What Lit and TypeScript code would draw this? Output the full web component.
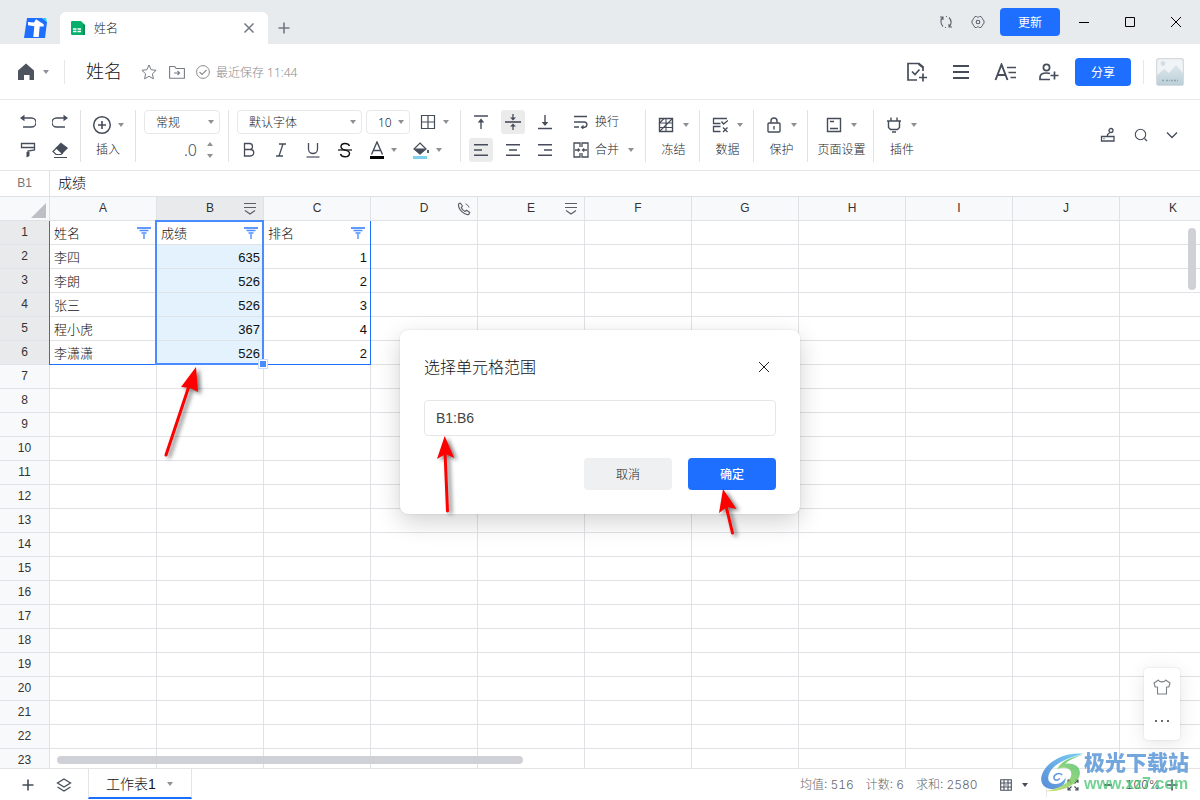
import { LitElement, html, css, svg, nothing } from "lit";
import { customElement, state } from "lit/decorators.js";
import { classMap } from "lit/directives/class-map.js";

const ic = (w: number, h: number, body: unknown) => html`<svg
  width=${w} height=${h} viewBox="0 0 ${w} ${h}" fill="none" stroke="currentColor" stroke-width="1.4" aria-hidden="true"
>${body}</svg>`;

const icons = {
  logo: () => ic(24, 22, svg`<path d="M3 1H18l5 4-2 16H0z" fill="#1e6fff" stroke="none"/><path d="M18 1h4l1 4z" fill="#19d3f5" stroke="none"/><path d="M4 5l6 .6L12 2.300l7.700 5v2.200h-4l-1 10.500H9.300l1-10.700L4 8.300z" fill="#fff" stroke="none"/>`),
  sheet: () => ic(14, 14, svg`<path d="M1 0h9l4 4v10H1a1 1 0 0 1-1-1V1a1 1 0 0 1 1-1z" fill="#07b06a" stroke="none"/><path d="M12 3l2 1v10h-2z" fill="#098f55" stroke="none"/><path d="M2 8h3.500M6.500 8H10M2 10.500h3.500M6.500 10.500H10" stroke="#fff" stroke-width="1.300"/>`),
  tabClose: () => ic(12, 12, svg`<path d="M1.500 1.500l9 9M10.500 1.500l-9 9" stroke-width="1.500"/>`),
  plus: () => ic(12, 12, svg`<path d="M6 .5v11M.5 6h11" stroke-width="1.600"/>`),
  sync: () => ic(14, 14, svg`<path d="M1 2h3v3M4 2C1.500 4 1 8.500 4 11.500M13 12h-3V9M10 12c2.500-2 3-6.500 0-9.500M7 1.500h1M6 12.500h1" stroke-width="1.100"/>`),
  gear: () => ic(14, 14, svg`<path d="M4 1.500h1.500l.8.600h1.400l.8-.6H10l1.500 2.200.3 1 1.200.8v3l-1.200.8-.3 1L10 12.500H8.500l-.8-.6H6.300l-.8.600H4l-1.500-2.200-.3-1L1 8.500v-3l1.200-.8.300-1z" stroke-width="1" stroke-linejoin="round"/><circle cx="7" cy="7" r="1.800" stroke-width="1.100"/>`),
  min: () => ic(12, 12, svg`<path d="M1 6.500h10" stroke-width="1"/>`),
  max: () => ic(12, 12, svg`<path d="M1.500 1.500h9v9h-9z" stroke-width="1"/>`),
  close: () => ic(12, 12, svg`<path d="M1 1l10 10M11 1L1 11" stroke-width="1"/>`),
  home: () => ic(18, 18, svg`<path d="M9 .5L17 7.500V17h-4.500v-5h-2.500v5H1V7.500z" fill="#4e545f" stroke="none"/><path d="M7 12h4v5H7z" fill="#fff" stroke="none"/>`),
  star: () => ic(16, 16, svg`<path d="M8 1l2.100 4.700 5 .6-3.700 3.500 1 5L8 12.300l-4.400 2.500 1-5L.9 6.300l5-.6z" stroke-width="1" stroke-linejoin="round"/>`),
  folder: () => ic(16, 14, svg`<path d="M.6 1.500h5l1.500 2h8.300v9.700H.6z" stroke-width="1.100" stroke-linejoin="round"/><path d="M5 8h5.500M8.500 6l2 2-2 2" stroke-width="1.200"/>`),
  saved: () => ic(14, 14, svg`<circle cx="7" cy="7" r="6.400" stroke-width="1"/><path d="M3.500 7l2.500 2.500 4.500-4.500" stroke-width="1.100"/>`),
  task: () => ic(22, 20, svg`<path d="M17 9V5l-4-3.500H2V18h9" stroke-width="1.700"/><path d="M6 9.500l3 3 4.500-5M12.500 2l4.500 3.500" stroke-width="1.700"/><path d="M17 11.500v8M13 15.500h8" stroke-width="1.700"/>`),
  menu: () => ic(18, 16, svg`<path d="M1 2h16M1 8h16M1 14h16" stroke-width="1.800"/>`),
  textStyle: () => ic(24, 18, svg`<path d="M1.500 17L7.500 1.500 13.500 17M3.500 12h8" stroke-width="1.900"/><path d="M13 4.500h9M14.500 9.500h7.500M16.500 14.500H22" stroke-width="1.700"/>`),
  addUser: () => ic(22, 18, svg`<circle cx="8.500" cy="4.500" r="3.100" stroke-width="1.700"/><path d="M12 16.500H2v-2c0-3 2-4.500 6.500-4.500 1.500 0 2.500 0 3.500.5" stroke-width="1.700"/><path d="M16.500 8.500v8M12.500 12.500h8" stroke-width="1.700"/>`),
  avatar: () => ic(28, 28, svg`<defs><linearGradient id="sky" x2="0" y2="1"><stop stop-color="#dde7ec"/><stop offset="1" stop-color="#bccfd8"/></linearGradient></defs><rect x=".5" y=".5" width="27" height="27" rx="3" fill="#f1f4f6" stroke="#d5dadd"/><circle cx="7" cy="5.500" r="2.400" fill="#d4dfe5" stroke="none"/><path d="M1 17l7-6 5 4 7-8 7 8v12H1z" fill="url(#sky)" stroke="none"/><path d="M6 22.500h3m1 0h2m1 0h1m1 0h7" stroke="#8ba6b4" stroke-dasharray="2 1"/>`),
  undo: () => ic(16, 16, svg`<path d="M3 4h8.500a4.500 4.500 0 0 1 0 9H3" stroke-width="1.300"/><path d="M0 4L4.500.8v6.400z" fill="currentColor" stroke="none"/>`),
  redo: () => ic(16, 16, svg`<path d="M13 4H4.500a4.500 4.500 0 0 0 0 9H13" stroke-width="1.300"/><path d="M16 4L11.500.8v6.400z" fill="currentColor" stroke="none"/>`),
  brush: () => ic(16, 16, svg`<path d="M1.500 1.500h13v4h-13zM14.500 4v4L8 9v2" stroke-width="1.300"/><path d="M6.500 10h3v4l-3 1.500z" fill="currentColor" stroke="none"/>`),
  eraser: () => ic(16, 16, svg`<path d="M9 1.500l6 4.500-5 5L4.500 6z" fill="currentColor"/><path d="M5 5.500L1 9.500l3 3h5l2-2M2 15.500h13" stroke-width="1.200"/>`),
  insert: () => ic(20, 20, svg`<circle cx="10" cy="10" r="8.300" stroke-width="1.500"/><path d="M10 6v8M6 10h8" stroke-width="1.600"/>`),
  borders: () => ic(16, 16, svg`<path d="M1.500 1.500h13v13h-13zM8 1.500v13M1.500 8h13" stroke-width="1.200"/>`),
  bold: () => ic(14, 16, svg`<path d="M2.500 1.500h5a3 3 0 0 1 0 6h-5zM2.500 7.500h6a3.200 3.200 0 0 1 0 6.500h-6z" stroke-width="1.300"/>`),
  italic: () => ic(14, 16, svg`<path d="M5 2h7M2 14h7M9 2L5 14" stroke-width="1.300"/>`),
  underline: () => ic(14, 16, svg`<path d="M2.500 1v6a4.500 4.500 0 0 0 9 0V1" stroke-width="1.300"/><path d="M.5 15h13" stroke-width="1.200"/>`),
  strike: () => ic(14, 16, svg`<path d="M11.500 4C11 2.500 9 1.500 7 1.500S3 2.500 3 4.700C3 7 5 7.500 7 8s4.500 1 4.500 3.300S9.500 14.800 7 14.800 3 13.500 2.500 12" stroke="#111" stroke-width="1.400"/><path d="M0 8h14" stroke="#111" stroke-width="1.200"/>`),
  color: () => ic(14, 18, svg`<path d="M1.500 13.500L7 1l5.500 12.500M3.500 9.500h7" stroke-width="1.400"/><path d="M0 16.500h14" stroke="#000" stroke-width="3"/>`),
  fill: () => ic(16, 18, svg`<path d="M7 2l6 6-6 5-6-5z" stroke-width="1.200"/><path d="M1 7.500h12l-6 6z" fill="currentColor" stroke="none"/><path d="M15 9v3" stroke-width="1.800"/><path d="M0 16.500h14" stroke="#7fd0ef" stroke-width="3"/>`),
  vTop: () => ic(14, 16, svg`<path d="M0 2h14" stroke-width="1.500"/><path d="M7 15V7"/><path d="M7 4.500l3.300 4H3.700z" fill="currentColor" stroke="none"/>`),
  vMid: () => ic(16, 18, svg`<path d="M0 9h16" stroke-width="1.600"/><path d="M8 1v4M8 17v-4" stroke-width="1.300"/><path d="M8 7.500L11 4.500H5zM8 10.500l3 3H5z" fill="currentColor" stroke="none"/>`),
  vBot: () => ic(14, 16, svg`<path d="M0 14.500h14" stroke-width="1.500"/><path d="M7 1v8"/><path d="M7 12L3.700 8h6.600z" fill="currentColor" stroke="none"/>`),
  hLeft: () => ic(14, 14, svg`<path d="M0 1.700h14M0 7h8M0 12.300h14" stroke-width="1.500"/>`),
  hMid: () => ic(14, 14, svg`<path d="M0 1.700h14M3 7h8M0 12.300h14" stroke-width="1.500"/>`),
  hRight: () => ic(14, 14, svg`<path d="M0 1.700h14M6 7h8M0 12.300h14" stroke-width="1.500"/>`),
  wrap: () => ic(16, 14, svg`<path d="M1 1.500h13M1 7h11a2.700 2.700 0 0 1 0 5.200H9M1 12h5"/><path d="M7.500 12.200l3-2.500v5z" fill="currentColor" stroke="none"/>`),
  merge: () => ic(16, 16, svg`<path d="M7 5V1H1v14h6v-4M9 5V1h6v14H9v-4M2 8h4M14 8h-4" stroke-width="1.300"/><path d="M7.500 8L4.800 5.700v4.600zM8.500 8l2.700-2.300v4.600z" fill="currentColor" stroke="none"/>`),
  freeze: () => ic(16, 16, svg`<path d="M1.500 1.500h13v13h-13z" stroke-width="1.400"/><path d="M1.500 6h13M8 1.500v13M1.500 10.500h13M1.500 6L6 1.500M1.500 14.500l13-13" stroke-width="1.100"/>`),
  data: () => ic(16, 16, svg`<path d="M15 1.500H1.500v5h7M8.500 9.500h-7v5h7M9.500 4.500l2 2.500L16 3.500M11 10.500l4.500 4.500M15.500 10.500L11 15" stroke-width="1.300"/>`),
  lock: () => ic(16, 16, svg`<rect x="2" y="6" width="12" height="9" rx="1"/><path d="M5 6V4a3 3 0 0 1 6 0v2M8 9v3.500" stroke-width="1.400"/>`),
  page: () => ic(16, 16, svg`<path d="M1.500 1.500h13v13h-13zM4 4.500h4M4 11.500h8"/>`),
  plugin: () => ic(16, 16, svg`<path d="M1 4h14M2.500 4v6.500l2 2h7l2-2V4M5 4V.5M11 4V.5M6 15h4" stroke-width="1.400"/>`),
  remote: () => ic(16, 16, svg`<path d="M1.500 9.500h12.500v4.500H1.500zM3.500 11.700h1M7.500 9.500v-2l2-1.500" stroke-width="1.300"/><circle cx="11" cy="3.500" r="2" stroke-width="1.300"/>`),
  search: () => ic(14, 14, svg`<circle cx="6.500" cy="6.500" r="5.200" stroke-width="1.100"/><path d="M10.500 10.500l2.500 2.500" stroke-width="1.200"/>`),
  chev: () => ic(12, 8, svg`<path d="M1 1.500l5 5 5-5"/>`),
  colMenu: () => ic(14, 13, svg`<path d="M1 1.500h12M1 5.500h12M2 8.500l5 3.500 5-3.500" stroke="#5c6066" stroke-width="1.200"/>`),
  phone: () => ic(14, 14, svg`<path d="M1.500 2L3.300 1l2.200 3-1.200 1.700c.8 1.600 2.100 2.900 3.700 3.700L9.700 8.200l3 2.200-1 2C7.500 13.500 1 7.500 1.500 2z" stroke="#5c6066" stroke-width="1.200" stroke-linejoin="round"/><path d="M8.500 2c1.800.4 3 1.600 3.500 3.500" stroke="#5c6066" stroke-width="1"/>`),
  filter: () => ic(14, 12, svg`<path d="M0 1h14" stroke="#1e6fff" stroke-width="1.400"/><path d="M2.500 3.500h9M4.500 6h5" stroke="#4d8dff" stroke-width="1.300"/><path d="M7 7v5" stroke="#4d8dff" stroke-width="1.400"/>`),
  shirt: () => ic(18, 16, svg`<path d="M5.500 1L1 4l1.200 4H4.500v7h9V8h2.300L17 4l-4.500-3C12 3.500 6 3.500 5.500 1z" stroke-width="1.100" stroke-linejoin="round"/>`),
  layers: () => ic(16, 14, svg`<path d="M8 1l6.500 4L8 9 1.500 5zM1.500 9L8 13l6.500-4" stroke-width="1.300"/>`),
  view: () => ic(12, 12, svg`<path d="M.7.700h10.600v10.600H.7zM4 1v10M8 1v10M1 4h10M1 8h10" stroke-width="1.100"/><path d="M4.600 4.600h2.800v2.800H4.600z" fill="#b9bcc2" stroke="none"/>`),
  full: () => ic(12, 12, svg`<path d="M1 4V1h3M8 1h3v3M11 8v3H8M4 11H1V8M1 1l3.500 3.500M11 1L7.500 4.500M11 11L7.500 7.500M1 11l3.500-3.500" stroke-width="1.100"/>`),
  minus: () => ic(10, 12, svg`<path d="M1 6h8" stroke-width="1.600"/>`),
};

type Row = [string, string, string];

@customElement("app-root")
export class AppRoot extends LitElement {
  @state() private range = "B1:B6";

  private cols = [..."ABCDEFGHIJK"];
  private rows: Row[] = [
    ["姓名", "成绩", "排名"],
    ["李四", "635", "1"],
    ["李朗", "526", "2"],
    ["张三", "526", "3"],
    ["程小虎", "367", "4"],
    ["李潇潇", "526", "2"],
  ];

  static styles = css`
    :host {
      display: flex; flex-direction: column; height: 100vh; overflow: hidden; position: relative;
      background: #fff; color: #22262c;
      font: 300 12px/18px "Liberation Sans", "Noto Sans CJK SC", sans-serif;
    }
    * { box-sizing: border-box; }
    svg { display: block; flex: none; }
    button, select, input { font: inherit; color: inherit; margin: 0; padding: 0; border: 0; background: none; }
    button { display: flex; align-items: center; justify-content: center; flex: none; }
    .blue { background: #1e6fff; color: #fff; border-radius: 4px; font-weight: 400; padding-top: 2px; }
    .caret { width: 0; height: 0; flex: none; border: 3px solid transparent; border-top: 4px solid #8d9095; border-bottom: 0; margin: 0 1px; }
    .spacer { flex: 1; }

    .titlebar { display: flex; height: 44px; padding-right: 1px; background: #e8ebee; flex: none; color: #5b616b; }
    .brand { width: 60px; padding: 17px 0 0 24px; }
    .tab { display: flex; align-items: center; gap: 9px; width: 208px; margin-top: 12px; padding: 0 13px 0 11px; background: #fff; border-radius: 6px 6px 0 0; color: #222; }
    .tab span, .saved span { padding-top: 2px; }
    .tab button { margin-left: auto; color: #737982; }
    .newtab { width: 32px; margin-top: 12px; color: #737982; }
    .tools { display: flex; align-items: center; }
    .tools .small { width: 32px; height: 32px; }
    .update { width: 60px; height: 28px; margin: 0 1px 0 6px; }
    .win { width: 46px; height: 44px; color: #000; }

    .header { display: flex; align-items: center; height: 56px; flex: none; border-bottom: 1px solid #e7e9eb; padding: 0 16px 0 17px; color: #767b85; }
    .home { gap: 7px; }
    .vline { width: 1px; height: 24px; background: #e6e8ea; flex: none; }
    .header .first { margin: 0 21px 0 14px; }
    .title { font-size: 18px; line-height: 26px; font-weight: 300; margin: 0; color: #111; }
    .meta { display: flex; align-items: center; gap: 12px; margin-left: 19px; }
    .saved { display: flex; align-items: center; gap: 6px; margin-left: -1px; color: #8c8c8c; font-family: "Noto Sans", "Noto Sans CJK SC", sans-serif; }
    .actions { display: flex; align-items: center; gap: 20px; color: #464d5a; }
    .actions .pad { padding: 0 4px; }
    .share { width: 56px; height: 28px; margin: 0 12px 0 15px; }
    .avatar { margin-left: 12px; }

    .toolbar { display: flex; height: 71px; flex: none; padding: 10px 16px 8px 0; border-bottom: 1px solid #e4e6e9; color: #464d5a; }
    .group { flex: none; border-right: 1px solid #e0e2e4; padding-left: 8px; display: flex; flex-direction: column; gap: 4px; }
    .group.last { border: 0; }
    .line { display: flex; align-items: center; gap: 8px; height: 24px; }
    .line button { min-width: 24px; height: 24px; border-radius: 3px; }
    .line button.on { background: #ebebeb; }
    .line button.drop { gap: 6px; justify-content: flex-start; padding: 0 2px 0 5px; }
    .g1 { width: 81px; padding-left: 16px; }
    .g3 { width: 93px; }
    .g4 { width: 232px; }
    .g5 { width: 185px; }
    .tall { width: 54px; }
    .ins { width: 55px; }
    .wide { width: 66px; }
    .group.stack { padding: 0 0 0 2px; gap: 0; }
    .group.ins { padding: 0; }
    .stack button { flex-direction: column; width: 100%; color: #464d5a; }
    .stack .top { display: flex; align-items: center; gap: 8px; height: 30px; }
    .stack.ins .top { gap: 5px; }
    .stack .label { padding-top: 1px; color: #22262c; white-space: nowrap; }
    .select { position: relative; display: flex; align-items: center; height: 24px; border: 1px solid #e7e8ea; border-radius: 4px; color: #22262c; font-family: "Noto Sans", "Noto Sans CJK SC", sans-serif; }
    .select select { appearance: none; width: 100%; height: 22px; padding: 1px 0 0 11px; outline: 0; }
    .select .caret { position: absolute; right: 4px; pointer-events: none; }
    .s1 { width: 76px; } .s2 { width: 125px; } .s3 { width: 44px; }
    .line.fonts { gap: 4px; }
    .line.fonts button { margin-left: 1px; }
    .line.dec { justify-content: flex-end; gap: 9px; padding-right: 14px; }
    .line.dec .num { font-size: 16px; font-family: "Noto Sans", sans-serif; }
    .spin { display: flex; flex-direction: column; gap: 8px; }
    .spin .up { transform: rotate(180deg); }
    .line button.text { gap: 6px; padding-left: 8px; }
    .line button.text span { color: #22262c; }
    .line button.text .caret { margin-left: 3px; }
    .right { display: flex; align-items: center; gap: 18px; margin: 0 6px 2px 0; }

    .formula { display: flex; align-items: flex-start; height: 26px; flex: none; border-bottom: 1px solid #dfe1e4; }
    .ref { width: 50px; text-align: center; border-right: 1px solid #dfe1e4; line-height: 25px; color: #777; }
    .formula input { flex: 1; font-size: 14px; padding-left: 8px; height: 22px; color: #000; outline: 0; }

    .sheet { position: relative; flex: 1; min-height: 0; overflow: hidden; }
    table { table-layout: fixed; border-collapse: separate; border-spacing: 0; width: 1227px; }
    th, td { height: 24px; padding: 0; border: solid #e0e2e5; border-width: 0 1px 1px 0; font-weight: 400; line-height: 22px; overflow: hidden; white-space: nowrap; }
    thead th { background: #f8f9fb; line-height: 23px; color: #333; }
    tbody th { background: #f8f9fb; color: #333; vertical-align: top; }
    thead th.sel, tbody th.sel { background: #e8eaec; }
    .corner { width: 50px; }
    .corner i { display: block; width: 0; height: 0; margin: 3px 0 0 31px; border-left: 15px solid transparent; border-bottom: 15px solid #bcbfc4; }
    .col { display: grid; grid-template-columns: 1fr auto 1fr; align-items: center; }
    .col svg { grid-column: 3; justify-self: end; margin-right: 6px; }
    td { font-size: 13px; font-weight: 300; color: #111; }
    td .cell { display: flex; align-items: center; justify-content: space-between; padding: 0 5px 0 4px; height: 23px; }
    td .cell span { padding-top: 2px; line-height: 21px; }
    td .cell.numeric { justify-content: flex-end; padding-right: 3px; }
    td.fill { background: #e3f2fd; }
    td.blank { height: 24px; }
    .dataset { position: absolute; left: 49px; top: 24px; width: 322px; height: 144px; border: 1px solid #1e6fff; border-top: 0; pointer-events: none; }
    .selection { position: absolute; left: 155px; top: 23px; width: 109px; height: 145px; border: 2px solid #4a8cff; pointer-events: none; }
    .handle { position: absolute; right: -5px; bottom: -5px; width: 8px; height: 8px; background: #4a8cff; border: 1px solid #fff; outline: 1px solid #c8dcff; }
    .hbar { position: absolute; left: 57px; bottom: 4px; width: 466px; height: 8px; border-radius: 4px; background: #d0d1d6; }
    .vbar { position: absolute; right: 4px; top: 31px; width: 8px; height: 62px; border-radius: 4px; background: #d0d1d6; }
    .float { position: absolute; right: 20px; bottom: 28px; width: 36px; padding: 2px 0; background: #fff; border-radius: 4px; box-shadow: 0 0 2px #0002, 0 4px 20px #0000001a; color: #7b8087; }
    .float button { width: 36px; height: 34px; }
    .dots { gap: 4px; }
    .dots i { width: 2px; height: 2px; background: #666b73; }

    .bottom { display: flex; align-items: center; height: 32px; flex: none; border-top: 1px solid #e2e4e6; color: #464d5a; padding-right: 22px; }
    .bottom .sq { width: 36px; height: 30px; }
    .bottom .sq:first-child { margin-left: 10px; }
    .sheettab { align-self: flex-start; height: 30px; margin-left: 6px; padding: 1px 17px 0; gap: 10px; font-size: 14px; border: 1px solid #e2e4e6; border-width: 0 1px 2px; border-bottom-color: #1e6fff; color: #111; }
    .stats { display: flex; gap: 12px; color: #666; }
    .stats, .pct { font-family: "Inter", "Noto Sans CJK SC", sans-serif; font-variant-numeric: tabular-nums; }
    .zoomctl { display: flex; align-items: center; margin-left: 23px; }
    .zoomctl .drop { gap: 9px; }
    .zoomctl .drop .caret { border-top-color: #464d5a; }
    .zoomctl .vline { margin: 0 20px 0 17px; }
    .zoomctl .less { margin: 0 12px 0 24px; }
    .zoomctl .more { margin-left: 6px; }

    .dialog { position: absolute; left: 50%; top: 330px; width: 400px; transform: translateX(-50%); padding: 24px; background: #fff; border-radius: 8px; box-shadow: 0 8px 24px #0000002e, 0 0 2px #0002; }
    .dialog header { display: flex; align-items: center; justify-content: space-between; padding-right: 6px; }
    .dialog h2 { margin: 0; padding-top: 2px; font-size: 16px; line-height: 24px; font-weight: 300; color: #111; }
    .dialog input { display: block; width: 100%; height: 36px; margin: 20px 0 22px; padding: 0 11px; border: 1px solid #e4e6e9; border-radius: 4px; font-size: 14px; outline: 0; color: #444; }
    .dialog footer { display: flex; justify-content: flex-end; gap: 16px; }
    .dialog footer button { width: 88px; height: 32px; padding-top: 2px; border-radius: 4px; }
    .cancel { background: #eff0f2; color: #222; }
    .dialog .ok { font-weight: 500; }

    .arrows { position: absolute; left: 0; top: 0; pointer-events: none; filter: drop-shadow(3px 2px 2px #0008); }
    .mark { position: absolute; right: 11px; bottom: 6px; display: flex; pointer-events: none; opacity: 0.85; font-weight: 700; }
    .mark div { display: flex; flex-direction: column; }
    .mark b { font-size: 21px; line-height: 24px; color: #5b97d8; }
    .mark span { font-size: 16px; line-height: 18px; color: #4cc474; opacity: 0.9; }
  `;

  private caret = html`<i class="caret"></i>`;

  private button(label: string, icon: unknown, cls = "") {
    return html`<button class=${cls} aria-label=${label}>${icon}</button>`;
  }

  private stack(label: string, icon: unknown, cls = "tall") {
    return html`<div class="group stack ${cls}">
      <button><span class="top">${icon}${this.caret}</span><span class="label">${label}</span></button>
    </div>`;
  }

  private select(label: string, value: string, cls: string) {
    return html`<div class="select ${cls}"><select aria-label=${label}><option>${value}</option></select>${this.caret}</div>`;
  }

  private colIcon(c: string) {
    if (c === "B" || c === "E") return icons.colMenu();
    if (c === "D") return icons.phone();
    return nothing;
  }

  private cell(row: Row | undefined, r: number, c: number) {
    const v = row?.[c];
    if (v === undefined) return html`<td class="blank"></td>`;
    return html`<td class=${classMap({ fill: c === 1 && r > 0 })}>
      <div class=${classMap({ cell: true, numeric: r > 0 && c > 0 })}><span>${v}</span>${r === 0 ? icons.filter() : nothing}</div>
    </td>`;
  }

  private sheet() {
    return html`<main class="sheet">
      <table>
        <thead><tr><th class="corner"><i></i></th>
          ${this.cols.map((c) => html`<th scope="col" class=${classMap({ sel: c === "B" })}><div class="col"><i></i><span>${c}</span>${this.colIcon(c)}</div></th>`)}
        </tr></thead>
        <tbody>
          ${Array.from({ length: 23 }, (_, r) => html`<tr>
            <th scope="row" class=${classMap({ sel: r < 6 })}>${r + 1}</th>
            ${this.cols.map((_c, c) => this.cell(this.rows[r], r, c))}
          </tr>`)}
        </tbody>
      </table>
      <div class="dataset"></div>
      <div class="selection"><i class="handle"></i></div>
      <div class="hbar"></div><div class="vbar"></div>
      <div class="float">
        ${this.button("主题", icons.shirt())}
        ${this.button("更多", html`<i></i><i></i><i></i>`, "dots")}
      </div>
    </main>`;
  }

  render() {
    return html`
      <div class="titlebar">
        <div class="brand">${icons.logo()}</div>
        <div class="tab">${icons.sheet()}<span>姓名</span>${this.button("关闭标签", icons.tabClose())}</div>
        ${this.button("新建", icons.plus(), "newtab")}
        <div class="spacer"></div>
        <div class="tools">
          ${this.button("刷新", icons.sync(), "small")}${this.button("设置", icons.gear(), "small")}
          <button class="blue update">更新</button>
          ${this.button("最小化", icons.min(), "win")}${this.button("最大化", icons.max(), "win")}${this.button("关闭", icons.close(), "win")}
        </div>
      </div>

      <div class="header">
        <button class="home" aria-label="首页">${icons.home()}${this.caret}</button>
        <div class="vline first"></div>
        <h1 class="title">姓名</h1>
        <div class="meta">
          ${this.button("收藏", icons.star())}${this.button("移动", icons.folder())}
          <div class="saved">${icons.saved()}<span>最近保存 11:44</span></div>
        </div>
        <div class="spacer"></div>
        <div class="actions">
          ${this.button("任务", icons.task())}${this.button("菜单", icons.menu(), "pad")}${this.button("文字", icons.textStyle())}${this.button("添加成员", icons.addUser())}
        </div>
        <button class="blue share">分享</button>
        <div class="vline"></div>
        <div class="avatar">${icons.avatar()}</div>
      </div>

      <div class="toolbar">
        <div class="group g1">
          <div class="line">${this.button("撤销", icons.undo())}${this.button("重做", icons.redo())}</div>
          <div class="line">${this.button("格式刷", icons.brush())}${this.button("清除", icons.eraser())}</div>
        </div>
        ${this.stack("插入", icons.insert(), "ins")}
        <div class="group g3">
          ${this.select("数字格式", "常规", "s1")}
          <div class="line dec"><span class="num">.0</span><span class="spin"><i class="caret up"></i><i class="caret"></i></span></div>
        </div>
        <div class="group g4">
          <div class="line fonts">
            ${this.select("字体", "默认字体", "s2")}${this.select("字号", "10", "s3")}
            ${this.button("边框", html`${icons.borders()}${this.caret}`, "drop")}
          </div>
          <div class="line">
            ${this.button("加粗", icons.bold())}${this.button("斜体", icons.italic())}${this.button("下划线", icons.underline())}${this.button("删除线", icons.strike())}
            ${this.button("文字颜色", html`${icons.color()}${this.caret}`, "drop")}
            ${this.button("填充颜色", html`${icons.fill()}${this.caret}`, "drop")}
          </div>
        </div>
        <div class="group g5">
          <div class="line">
            ${this.button("顶端对齐", icons.vTop())}${this.button("垂直居中", icons.vMid(), "on")}${this.button("底端对齐", icons.vBot())}
            <button class="text">${icons.wrap()}<span>换行</span></button>
          </div>
          <div class="line">
            ${this.button("左对齐", icons.hLeft(), "on")}${this.button("居中", icons.hMid())}${this.button("右对齐", icons.hRight())}
            <button class="text">${icons.merge()}<span>合并</span>${this.caret}</button>
          </div>
        </div>
        ${this.stack("冻结", icons.freeze())}${this.stack("数据", icons.data())}${this.stack("保护", icons.lock())}
        ${this.stack("页面设置", icons.page(), "wide")}${this.stack("插件", icons.plugin(), "tall last")}
        <div class="spacer"></div>
        <div class="right">${this.button("控制", icons.remote())}${this.button("搜索", icons.search())}${this.button("收起", icons.chev())}</div>
      </div>

      <div class="formula"><div class="ref">B1</div><input aria-label="编辑栏" .value=${"成绩"} /></div>

      ${this.sheet()}

      <div class="bottom">
        ${this.button("添加工作表", icons.plus(), "sq")}${this.button("全部工作表", icons.layers(), "sq")}
        <button class="sheettab">工作表1${this.caret}</button>
        <div class="spacer"></div>
        <div class="stats"><span>均值: 516</span><span>计数: 6</span><span>求和: 2580</span></div>
        <div class="zoomctl">
          ${this.button("视图", html`${icons.view()}${this.caret}`, "drop")}
          <div class="vline"></div>
          ${this.button("全屏", icons.full())}
          ${this.button("缩小", icons.minus(), "less")}<span class="pct">100%</span>${this.button("放大", icons.plus(), "more")}
        </div>
      </div>

      <section class="dialog" role="dialog" aria-labelledby="dlg-title">
        <header><h2 id="dlg-title">选择单元格范围</h2>${this.button("关闭", icons.close())}</header>
        <input aria-labelledby="dlg-title" .value=${this.range} @input=${(e: Event) => (this.range = (e.target as HTMLInputElement).value)} />
        <footer><button class="cancel">取消</button><button class="blue ok">确定</button></footer>
      </section>

      <svg class="arrows" width="800" height="600" viewBox="0 0 800 600" fill="#f00" stroke="#f00" stroke-width="3" stroke-linecap="round" aria-hidden="true">
        <path d="M166 455L189 386M447.500 511L445 452M732.500 533L726 506" />
        <path stroke="none" d="M196 367l2 25-8-4-9-1zM444.700 436l9.600 22-8.800-4-8.500 5zM723 489l13.500 20-9.500-2-8 6z" />
      </svg>

      <div class="mark">
        <svg width="44" height="43" viewBox="120 295 138 130" aria-hidden="true">
          <defs>
            <linearGradient id="wa" x1="1" y1="0" x2="0" y2="1"><stop stop-color="#63c8f2" /><stop offset="1" stop-color="#3c78d0" /></linearGradient>
            <linearGradient id="wb" x1="1" y1="0" x2="0" y2="1"><stop stop-color="#3fbf74" /><stop offset="1" stop-color="#c8dc5a" /></linearGradient>
          </defs>
          <path fill="url(#wa)" d="M256 301C200 294 134 326 124 375c-3 24 14 38 40 37 24-2 38-18 36-36-8 14-20 22-34 20-22-2-26-20-12-42 20-28 62-42 102-53z" />
          <path fill="url(#wb)" d="M254 304c-42 8-72 24-80 46 24-10 46-4 44 18-3 24-40 44-83 51 58 2 108-22 110-56 2-24-24-34-46-30 10-12 30-20 55-29z" />
          <path fill="none" stroke="#4b8ad8" stroke-width="5" d="M190 368c-10-10-28-2-26 10 2 8 14 8 18 0" />
        </svg>
        <div><b>极光下载站</b><span>www.xz7.com</span></div>
      </div>
    `;
  }
}
